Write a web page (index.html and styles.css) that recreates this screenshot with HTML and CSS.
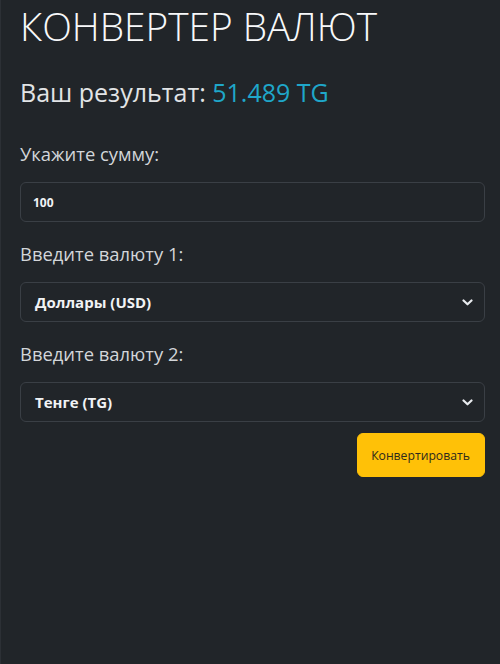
FILE: index.html
```html
<!DOCTYPE html>
<html lang="ru">
<head>
<meta charset="utf-8">
<title>Конвертер валют</title>
<link rel="stylesheet" href="styles.css">
</head>
<body>
<main class="page">
  <h1 class="title">КОНВЕРТЕР ВАЛЮТ</h1>
  <h2 class="result">Ваш результат: <span class="result-value">51.489 TG</span></h2>
  <form class="form">
    <label class="label label-first">Укажите сумму:</label>
    <div class="field field-input"><span class="field-text small">100</span></div>
    <label class="label">Введите валюту 1:</label>
    <div class="field field-select"><span class="field-text">Доллары (USD)</span>
      <svg class="chev" width="11" height="7" viewBox="0 0 11 7"><path d="M1.5 1.5 L5.5 5.3 L9.5 1.5" fill="none" stroke="#e9ecef" stroke-width="2.2" stroke-linecap="round" stroke-linejoin="round"/></svg>
    </div>
    <label class="label">Введите валюту 2:</label>
    <div class="field field-select"><span class="field-text">Тенге (TG)</span>
      <svg class="chev" width="11" height="7" viewBox="0 0 11 7"><path d="M1.5 1.5 L5.5 5.3 L9.5 1.5" fill="none" stroke="#e9ecef" stroke-width="2.2" stroke-linecap="round" stroke-linejoin="round"/></svg>
    </div>
    <div class="actions"><button type="button" class="btn">Конвертировать</button></div>
  </form>
</main>
</body>
</html>
```
FILE: styles.css
```css
html, body {
  margin: 0;
  padding: 0;
  background: #212529;
  height: 100%;
}
body {
  font-family: "Open Sans", "Noto Sans", sans-serif;
  color: #dee2e6;
  border-left: 1px solid #2c3035;
  box-sizing: border-box;
}
.page {
  padding: 3px 15.5px 0 19px;
}
.title {
  margin: 0;
  font-weight: 300;
  font-size: 38.8px;
  line-height: 46px;
  color: #f8f9fa;
}
.result {
  margin: 28px 0 0;
  font-weight: 400;
  font-size: 25px;
  line-height: 30px;
  color: #e2e4e6;
}
.result-value {
  color: #1fa7c9;
}
.form {
  display: flex;
  flex-direction: column;
}
.label {
  margin-top: 20px;
  font-size: 18.4px;
  line-height: 24px;
  color: #d3d6d9;
}
.label-first {
  margin-top: 35px;
}
.field {
  margin-top: 16px;
  height: 40px;
  box-sizing: border-box;
  border: 1px solid #3a3f45;
  border-radius: 6px;
  display: flex;
  align-items: center;
  justify-content: space-between;
  padding: 0 11px 0 12px;
}
.field-text {
  font-weight: 700;
  font-size: 15px;
  color: #f1f3f5;
  padding-left: 2px;
}
.field-text.small {
  font-size: 12px;
  padding-left: 0;
}
.chev {
  display: block;
}
.actions {
  display: flex;
  justify-content: flex-end;
  margin-top: 11px;
}
.btn {
  width: 128px;
  height: 44px;
  background: #ffc107;
  border: 1px solid #ffc107;
  border-radius: 6px;
  font-family: "Open Sans", "Noto Sans", sans-serif;
  font-size: 12.2px;
  color: #2e2a1c;
  padding: 0;
}
```
